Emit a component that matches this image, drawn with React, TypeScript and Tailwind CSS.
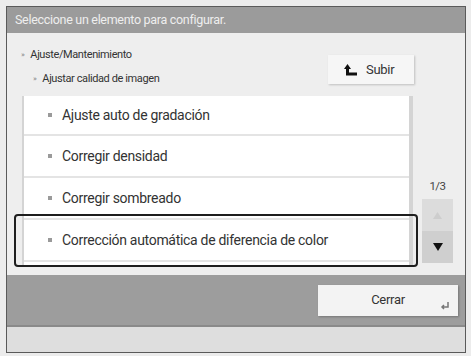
import React from 'react';

const items = [
  'Ajuste auto de gradación',
  'Corregir densidad',
  'Corregir sombreado',
];

const Bullet = () => <span className="w-[4px] h-[4px] bg-[#9a9a9a] shrink-0" />;

const App: React.FC = () => {
  return (
    <div
      className="w-[471px] h-[356px] bg-[#ececec] pt-[6px] pl-[6px] pr-[5px] pb-[3px] overflow-hidden"
      style={{ fontFamily: 'Roboto, "Liberation Sans", sans-serif' }}
    >
      <div className="h-full border border-[#5a5a5a] flex flex-col">
        {/* Title */}
        <div className="h-[26px] bg-[#9b9b9b] text-[#eeeeee] text-[12.5px] tracking-[-0.3px] pl-[8px] flex items-center shrink-0">
          Seleccione un elemento para configurar.
        </div>

        {/* Content */}
        <div className="flex-1 bg-[#eeeeee] flex flex-col">
          <div className="flex items-start h-[63px] shrink-0">
            <div className="flex flex-col pl-[14px] pt-[14px] gap-[7px] text-[11px] text-[#333] tracking-[-0.4px] flex-1">
              <div className="flex items-center gap-[6px]">
                <span className="text-[#888] text-[8px]">»</span>
                <span>Ajuste/Mantenimiento</span>
              </div>
              <div className="flex items-center gap-[6px] pl-[12px]">
                <span className="text-[#888] text-[8px]">»</span>
                <span>Ajustar calidad de imagen</span>
              </div>
            </div>
            <div className="mt-[22px] mr-[51px] w-[86px] h-[29px] bg-[#f6f6f6] shadow-[1px_1px_2px_rgba(0,0,0,0.2)] flex items-center pl-[16px] gap-[8px] text-[13px] text-[#333] tracking-[-0.3px]">
              <svg width="14" height="12" viewBox="0 0 14 12">
                <path d="M0 5 L3.5 0 L7 5 L5 5 L5 8.5 L13 8.5 L13 11.5 L2 11.5 L2 5 Z" fill="#111" />
              </svg>
              <span>Subir</span>
            </div>
          </div>

          <div className="flex">
            {/* List */}
            <div className="w-[391px] ml-[15px] h-[171px] bg-white border-l-[2px] border-r-[4px] border-[#d4d4d4] flex flex-col">
              {items.map((t, i) => (
                <div
                  key={i}
                  className={`${i === 0 ? 'h-[40px]' : 'h-[42px]'} shrink-0 flex items-center gap-[10px] pl-[24px] text-[14px] text-[#333] tracking-[-0.3px] border-b-[2px] border-[#e4e4e4]`}
                >
                  <Bullet />
                  <span>{t}</span>
                </div>
              ))}
              <div className="relative h-[42px] shrink-0 flex items-center gap-[10px] pl-[24px] text-[14px] text-[#333] tracking-[-0.3px] border-b-[2px] border-[#e4e4e4]">
                <Bullet />
                <span>Corrección automática de diferencia de color</span>
                <div className="absolute -left-[10px] -right-[9px] -top-[6px] -bottom-[7px] border-2 border-[#1e1e1e] rounded-[4px]" />
              </div>
            </div>

            {/* Scroll */}
            <div className="flex flex-col items-center w-[35px] ml-[7px] pt-[82px]">
              <div className="text-[11.5px] text-[#444] tracking-[-0.5px] mb-[4px]">1/3</div>
              <div className="w-[31px] h-[32px] bg-[#dcdcdc] flex items-center justify-center">
                <svg width="9" height="7" viewBox="0 0 9 7">
                  <path d="M4.5 0 L9 7 L0 7 Z" fill="#cdcdcd" />
                </svg>
              </div>
              <div className="w-[31px] h-[32px] bg-[#cfcfcf] flex items-center justify-center">
                <svg width="10" height="8" viewBox="0 0 10 8">
                  <path d="M0 0 L10 0 L5 8 Z" fill="#111" />
                </svg>
              </div>
            </div>
          </div>
        </div>

        {/* Bottom bar */}
        <div className="h-[52px] bg-[#9d9d9d] border-b-[2px] border-[#8a8a8a] flex items-center justify-end pr-[7px] shrink-0">
          <div className="relative w-[140px] h-[31px] bg-[#f3f3f3] shadow-[1px_1px_2px_rgba(0,0,0,0.25)] flex items-center justify-center text-[13px] text-[#333] tracking-[-0.3px]">
            Cerrar
            <svg className="absolute right-[8px] bottom-[6px]" width="10" height="8" viewBox="0 0 10 8">
              <path d="M8 0 L8 5 L2 5 M4 3 L2 5 L4 7" stroke="#777" strokeWidth="1.5" fill="none" />
            </svg>
          </div>
        </div>
        <div className="h-[25px] bg-[#dedede] shrink-0" />
      </div>
    </div>
  );
};

export default App;
